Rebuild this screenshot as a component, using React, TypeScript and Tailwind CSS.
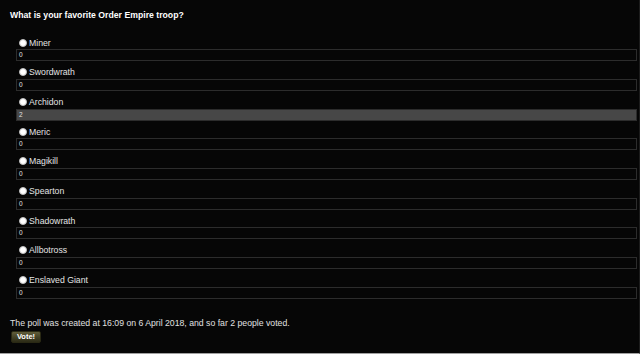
const options = [
  { name: 'Miner', votes: 0 },
  { name: 'Swordwrath', votes: 0 },
  { name: 'Archidon', votes: 2 },
  { name: 'Meric', votes: 0 },
  { name: 'Magikill', votes: 0 },
  { name: 'Spearton', votes: 0 },
  { name: 'Shadowrath', votes: 0 },
  { name: 'Allbotross', votes: 0 },
  { name: 'Enslaved Giant', votes: 0 },
];

const total = options.reduce((sum, o) => sum + o.votes, 0);

export default function App() {
  return (
    <div className="w-[640px] h-[354px] overflow-hidden bg-[#060606] border-r border-r-[#1c1c1c] border-b border-b-[#a0a0a0] font-['Liberation_Sans',Arial,sans-serif] text-[#e4e4e4]">
      {/* Question */}
      <div className="h-[31.6px] pt-[9px] pl-[10px]">
        <h1 className="text-[8.7px] leading-[12px] font-bold text-white">
          What is your favorite Order Empire troop?
        </h1>
      </div>

      {/* Options */}
      <div className="ml-[16px] mr-[2px]">
        {options.map((opt) => {
          const pct = total ? (opt.votes / total) * 100 : 0;
          return (
            <div key={opt.name}>
              <label className="h-[17.7px] pt-[6px] pl-[3px] flex items-start">
                <span className="h-[10px] flex items-center">
                  <span className="w-[8px] h-[8px] rounded-full bg-white border border-[#bdbdbd]" />
                </span>
                <span className="ml-[2px] text-[8.7px] leading-[10px]">{opt.name}</span>
              </label>
              <div className="relative h-[12px] border border-[#2c2c2c] bg-[#060606]">
                <div
                  className="absolute inset-y-0 left-0 bg-[#474747]"
                  style={{ width: `${pct}%` }}
                />
                <span className="relative block pl-[2px] text-[6.5px] leading-[9.5px] text-[#e0e0e0]">
                  {opt.votes}
                </span>
              </div>
            </div>
          );
        })}
      </div>

      {/* Footer */}
      <div className="pl-[10px] mt-[19px]">
        <p className="text-[8.7px] leading-[11px] text-[#e0e0e0]">
          The poll was created at 16:09 on 6 April 2018, and so far 2 people voted.
        </p>
        <button
          type="button"
          className="block mt-[2px] ml-[1px] w-[30px] h-[12px] rounded-[2px] border border-[#2a2914] bg-gradient-to-b from-[#615e3b] to-[#2c2b16] text-[7.5px] leading-[9px] font-bold text-white"
        >
          Vote!
        </button>
      </div>
    </div>
  );
}
